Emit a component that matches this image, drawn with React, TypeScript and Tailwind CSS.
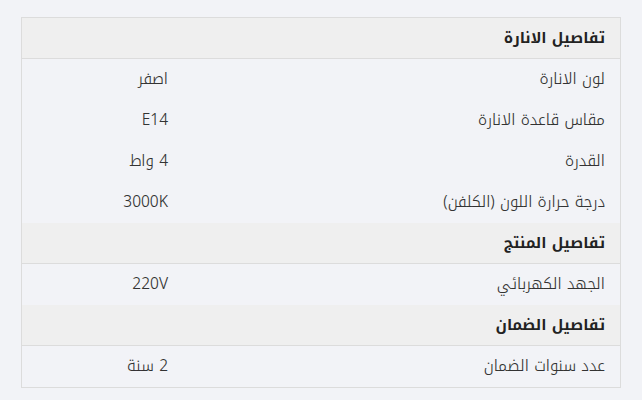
import React from "react";

type Row = { label: string; value: string };
type Section = { title: string; rows: Row[] };

const sections: Section[] = [
  {
    title: "تفاصيل الانارة",
    rows: [
      { label: "لون الانارة", value: "اصفر" },
      { label: "مقاس قاعدة الانارة", value: "E14" },
      { label: "القدرة", value: "4 واط" },
      { label: "درجة حرارة اللون (الكلفن)", value: "3000K" },
    ],
  },
  {
    title: "تفاصيل المنتج",
    rows: [{ label: "الجهد الكهربائي", value: "220V" }],
  },
  {
    title: "تفاصيل الضمان",
    rows: [{ label: "عدد سنوات الضمان", value: "2 سنة" }],
  },
];

export default function App() {
  return (
    <div
      dir="rtl"
      className="w-[642px] h-[400px] bg-[#f2f3f7] pt-[17px] pr-[21px] pl-[21px]"
      style={{ fontFamily: '"Noto Kufi Arabic", "Noto Sans", sans-serif' }}
    >
      <div className="border border-[#dcdcdc] w-[600px]">
        {sections.map((s) => (
          <div key={s.title}>
            <div className="h-[41px] bg-[#efefef] border-b border-[#dcdcdc] flex items-center pr-[15px] text-[15px] font-bold text-[#222]">
              {s.title}
            </div>
            {s.rows.map((r, i) => (
              <div key={i} className="h-[41px] flex items-center text-[15.5px] font-light text-[#333]">
                <div className="w-[437px] pr-[15px]">{r.label}</div>
                <div className="pr-[15px]">{r.value}</div>
              </div>
            ))}
          </div>
        ))}
      </div>
    </div>
  );
}
